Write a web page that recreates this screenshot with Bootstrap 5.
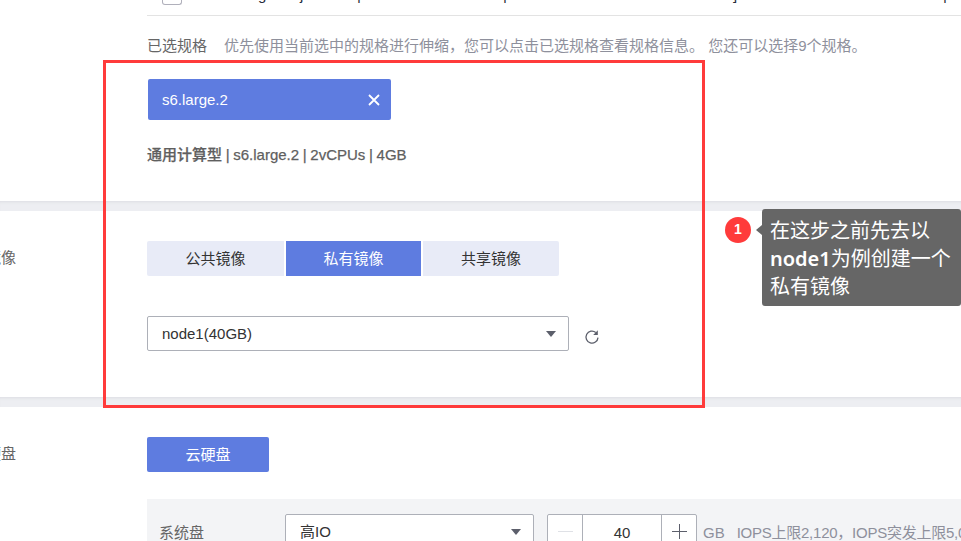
<!DOCTYPE html>
<html lang="zh-CN">
<head>
    <meta charset="UTF-8">
    <meta name="viewport" content="width=device-width, initial-scale=1.0">
    <title>Image step</title>
    <link href="https://cdn.jsdelivr.net/npm/bootstrap@5.3.0/dist/css/bootstrap.min.css" rel="stylesheet">
    <style>
        html, body {
            height: 541px;
            overflow: hidden;
        }

        body {
            position: relative;
            font-family: "Liberation Sans", "Noto Sans CJK SC", sans-serif;
            font-size: 15px;
            line-height: 20px;
            color: #666;
            background: #fff;
        }

        .form-sec {
            display: flex;
            background: #fff;
        }

        .sec-spec {
            height: 201px;
        }

        .sec-image {
            height: 186px;
        }

        .sec-disk {
            height: 134px;
        }

        .gray-band {
            height: 10px;
            background: #edeef2;
            box-shadow: inset 0 3px 3px -2px #dcdde2;
        }

        .sec-label {
            flex: 0 0 147px;
            width: 147px;
            min-width: 0;
            padding: 37px 131px 0 0;
            display: flex;
            justify-content: flex-end;
            white-space: nowrap;
            color: #666;
        }

        .sec-spec .sec-label {
            padding-top: 0;
        }

        .sec-body {
            flex: 1 1 auto;
            min-width: 0;
        }

        .top-row {
            display: grid;
            grid-template-columns: 15px 96px 42px 57px 146px 230px 210px auto;
            height: 16px;
            border-bottom: 1px solid #e3e3e3;
            margin-bottom: 20px;
            color: #252b3a;
        }

        .top-row span {
            margin-top: -15px;
            height: 20px;
        }

        .top-row .fake-check {
            display: block;
            width: 20px;
            height: 5px;
            margin-top: 0;
            border: 1px solid #b0b0bb;
            border-top: 0;
            border-radius: 0 0 3px 3px;
        }

        .picked-note {
            color: #8e909c;
            margin-left: 17px;
        }

        .picked-tag {
            width: 243px;
            height: 41px;
            margin: 23px 0 0 1px;
            padding: 0 11px 0 14px;
            background: #5e7ce0;
            color: #fff;
            border-radius: 2px;
        }

        .picked-sum {
            margin-top: 25px;
            font-weight: 500;
            color: #5f5f5f;
            word-spacing: -0.5px;
            -webkit-text-stroke: 0.25px #5f5f5f;
        }

        .tab-row {
            display: flex;
            gap: 2px;
            margin-top: 30px;
        }

        .img-tab {
            width: 136px;
            height: 35px;
            line-height: 36px;
            text-align: center;
            background: #e8ebf7;
            color: #333;
        }

        .img-tab.on {
            width: 135px;
            background: #5e7ce0;
            color: #fff;
        }

        .tab-row .img-tab:first-child {
            width: 137px;
            border-radius: 2px 0 0 2px;
        }

        .tab-row .img-tab:last-child {
            border-radius: 0 2px 2px 0;
        }

        .fake-select {
            flex-shrink: 0;
            height: 35px;
            padding: 0 12px 0 14px;
            background: #fff;
            border: 1px solid #adb0b8;
            border-radius: 2px;
            color: #333;
        }

        .select-arrow {
            width: 0;
            height: 0;
            border-left: 5px solid transparent;
            border-right: 5px solid transparent;
            border-top: 6px solid #5c5f6b;
        }

        .sel-image {
            width: 422px;
        }

        .image-row {
            margin-top: 40px;
        }

        .refresh-ico {
            margin: 6px 0 0 15px;
        }

        .disk-btn {
            width: 122px;
            height: 35px;
            margin-top: 30px;
            line-height: 36px;
            text-align: center;
            background: #5e7ce0;
            color: #fff;
            border-radius: 2px;
        }

        .disk-panel {
            height: 60px;
            margin-top: 27px;
            padding: 15px 0 0 12px;
            background: #f3f4f6;
            white-space: nowrap;
            overflow: hidden;
        }

        .disk-name {
            flex: 0 0 126px;
            padding-top: 9px;
        }

        .sel-disk {
            width: 249px;
        }

        .stepper {
            display: flex;
            flex: 0 0 150px;
            height: 35px;
            margin-left: 13px;
            background: #fff;
            border: 1px solid #adb0b8;
            border-radius: 2px;
            color: #333;
        }

        .step-btn {
            width: 34px;
            display: flex;
            align-items: center;
            justify-content: center;
        }

        .step-num {
            flex: 1 1 auto;
            text-align: center;
            line-height: 36px;
            border-left: 1px solid #adb0b8;
            border-right: 1px solid #adb0b8;
        }

        .disk-note {
            flex-shrink: 0;
            margin-left: 6px;
            padding-top: 9px;
            color: #8e909c;
        }

        .note-gap {
            margin-left: 12px;
            letter-spacing: -0.25px;
        }

        .red-box {
            position: absolute;
            left: 103px;
            top: 60px;
            width: 602px;
            height: 348px;
            border: 3px solid #ff3b3b;
            pointer-events: none;
        }

        .step-dot {
            position: absolute;
            left: 725px;
            top: 217px;
            width: 26px;
            height: 26px;
            line-height: 25px;
            border-radius: 50%;
            background: #ff3b3b;
            color: #fff;
            font-size: 14px;
            font-weight: 700;
            text-align: center;
        }

        .step-tip {
            position: absolute;
            left: 762px;
            top: 209px;
            width: 199px;
            height: 97px;
            padding: 8px 8px;
            background: #666;
            color: #fff;
            border-radius: 3px;
            font-family: "Noto Sans", "Noto Sans CJK SC", sans-serif;
            font-size: 20px;
            line-height: 28px;
        }

        .step-tip::before {
            content: "";
            position: absolute;
            left: -6px;
            top: 16px;
            border-top: 5px solid transparent;
            border-bottom: 5px solid transparent;
            border-right: 6px solid #666;
        }
    </style>
</head>
<body>
<div class="form-sec sec-spec">
    <div class="sec-label"></div>
    <div class="sec-body">
        <!-- row above is cut off by the top edge, only descenders show -->
        <div class="top-row">
            <i></i><span class="fake-check"></span><span>g</span><span>j</span><span>|</span><span>|</span><span>]</span><span>|</span>
        </div>
        <div class="d-flex">
            <span>已选规格</span>
            <span class="picked-note">优先使用当前选中的规格进行伸缩，您可以点击已选规格查看规格信息。 您还可以选择9个规格。</span>
        </div>
        <div class="picked-tag d-flex align-items-center justify-content-between">
            <span>s6.large.2</span>
            <svg width="12" height="12" viewBox="0 0 12 12"><path d="M1 1L11 11M11 1L1 11" stroke="#fff" stroke-width="1.8" fill="none"/></svg>
        </div>
        <div class="picked-sum">通用计算型 | s6.large.2 | 2vCPUs | 4GB</div>
    </div>
</div>
<div class="gray-band"></div>

<div class="form-sec sec-image">
    <div class="sec-label">镜像</div>
    <div class="sec-body">
        <div class="tab-row">
            <div class="img-tab">公共镜像</div>
            <div class="img-tab on">私有镜像</div>
            <div class="img-tab">共享镜像</div>
        </div>
        <div class="image-row d-flex align-items-center">
            <div class="fake-select sel-image d-flex align-items-center justify-content-between">
                <span>node1(40GB)</span>
                <span class="select-arrow"></span>
            </div>
            <svg class="refresh-ico" width="16" height="16" viewBox="0 0 16 16"><path d="M14 8.6A6 6 0 1 1 11.8 3.4" stroke="#5c5f6b" stroke-width="1.3" fill="none"/><path d="M13.8 1.2V6H9.2z" fill="#5c5f6b"/></svg>
        </div>
    </div>
</div>
<div class="gray-band"></div>

<div class="form-sec sec-disk">
    <div class="sec-label">云硬盘</div>
    <div class="sec-body">
        <div class="disk-btn">云硬盘</div>
        <div class="disk-panel d-flex align-items-start">
            <span class="disk-name">系统盘</span>
            <div class="fake-select sel-disk d-flex align-items-center justify-content-between">
                <span>高IO</span>
                <span class="select-arrow"></span>
            </div>
            <div class="stepper">
                <div class="step-btn"><svg width="15" height="15" viewBox="0 0 15 15"><path d="M0 7.5H15" stroke="#dfe1e6"/></svg></div>
                <div class="step-num">40</div>
                <div class="step-btn"><svg width="15" height="15" viewBox="0 0 15 15"><path d="M0 7.5H15M7.5 0V15" stroke="#5c5f6b"/></svg></div>
            </div>
            <span class="disk-note">GB<span class="note-gap">IOPS上限2,120，IOPS突发上限5,000</span></span>
        </div>
    </div>
</div>

<div class="red-box"></div>
<div class="step-dot">1</div>
<div class="step-tip">在这步之前先去以<span class="fw-semibold">node1</span>为例创建一个私有镜像</div>

<script src="https://cdn.jsdelivr.net/npm/bootstrap@5.3.0/dist/js/bootstrap.bundle.min.js"></script>
</body>
</html>
